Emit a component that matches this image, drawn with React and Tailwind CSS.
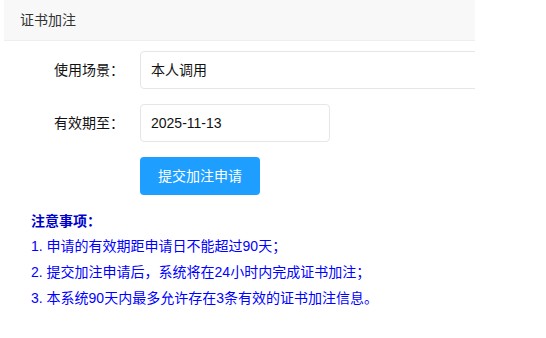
import React from "react";

const font = { fontFamily: '"Liberation Sans", "Noto Sans CJK SC", sans-serif' };

const notes = [
  "1. 申请的有效期距申请日不能超过90天；",
  "2. 提交加注申请后，系统将在24小时内完成证书加注；",
  "3. 本系统90天内最多允许存在3条有效的证书加注信息。",
];

const App = () => {
  return (
    <div className="min-h-screen bg-white" style={font}>
      <div className="ml-1 w-[471px] overflow-hidden">
        <div className="h-[41px] bg-[#f8f8f8] border-b border-[#eeeeee] pl-4 flex items-center text-sm text-[#333]">
          证书加注
        </div>

        <div className="mt-[10px] flex flex-col gap-[15px]">
          <div className="flex items-center">
            <label className="w-[120px] shrink-0 text-right text-sm text-[#111]">使用场景：</label>
            <div className="ml-[16px] w-[400px] shrink-0 h-[38px] border border-[#e6e6e6] rounded-sm pl-[10px] flex items-center text-sm text-[#111]">
              本人调用
            </div>
          </div>
          <div className="flex items-center">
            <label className="w-[120px] shrink-0 text-right text-sm text-[#111]">有效期至：</label>
            <div className="ml-[16px] w-[190px] shrink-0 h-[38px] border border-[#e6e6e6] rounded-sm pl-[10px] flex items-center text-sm text-[#111]">
              2025-11-13
            </div>
          </div>
          <div className="flex">
            <button className="ml-[136px] h-[38px] w-[120px] bg-[#1e9fff] text-white text-sm rounded-sm">
              提交加注申请
            </button>
          </div>
        </div>

        <div className="mt-[14px] pl-[27px] text-sm text-[#0000ff]">
          <p className="leading-[24px] font-bold text-[#0000cc]">注意事项：</p>
          {notes.map((n, i) => (
            <p key={i} className="leading-[26px]">
              {n}
            </p>
          ))}
        </div>
      </div>
    </div>
  );
};

export default App;
